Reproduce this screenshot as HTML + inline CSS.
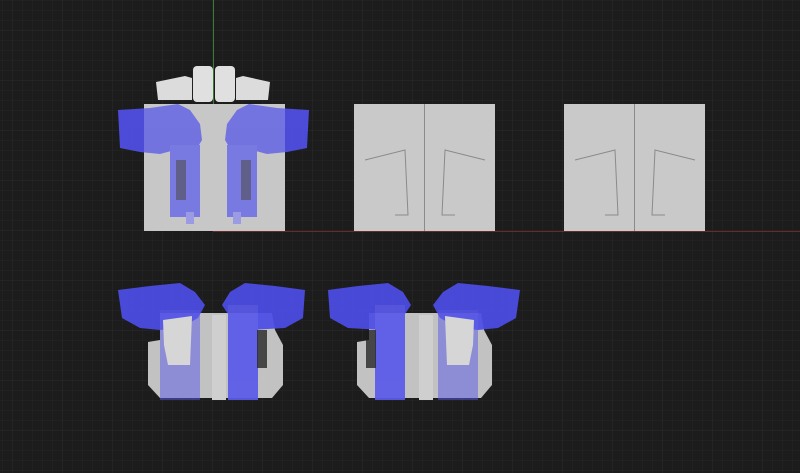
<!DOCTYPE html>
<html><head><style>
html,body{margin:0;padding:0;background:#1c1c1c;width:800px;height:473px;overflow:hidden}
svg{display:block}
</style></head><body>
<svg width="800" height="473" viewBox="0 0 800 473" xmlns="http://www.w3.org/2000/svg">
<defs>
<pattern id="g" width="10" height="10" patternUnits="userSpaceOnUse" x="3" y="1">
<path d="M10 0V10M0 10H10" stroke="#262626" stroke-width="1" fill="none"/>
</pattern>
<pattern id="g2" width="50" height="50" patternUnits="userSpaceOnUse" x="13" y="31">
<path d="M50 0V50M0 50H50" stroke="#2c2c2c" stroke-width="1" fill="none"/>
</pattern>
<g id="gunL">
<path d="M118 110 L150 108 L178 104 L190 110 L200 124 L202 140 L196 150 L175 150 L160 154 L140 152 L120 148 Z" fill="#5050e8"/>
<rect x="170" y="145" width="30" height="72" fill="#5858ea"/>
<rect x="176" y="160" width="10" height="40" fill="#1c1c1c" opacity="0.6"/>
<rect x="186" y="212" width="8" height="12" fill="#8888ee"/>
</g>
<g id="plate">
<path d="M12 13 L124 13 L127 30 L135 45 L135 85 L124 98 L12 98 L0 85 L0 42 L12 40 Z" fill="#c2c2c2"/>
</g>
<g id="gunB">
<path d="M118 290 L150 286 L180 283 L195 292 L205 305 L198 318 L180 328 L160 330 L140 328 L122 318 Z" fill="#4d4de6"/>
<rect x="160" y="310" width="40" height="90" fill="#5a5aea" opacity="0.55"/>
</g>
<g id="gunB2">
<path d="M305 290 L275 286 L245 283 L230 292 L222 305 L232 320 L250 330 L285 328 L303 318 Z" fill="#4d4de6"/>
<rect x="228" y="305" width="30" height="95" fill="#5a5aea"/>
<rect x="257" y="330" width="10" height="38" fill="#1c1c1c" opacity="0.8"/>
</g>
</defs>
<rect width="800" height="473" fill="#1c1c1c"/>
<rect width="800" height="473" fill="url(#g)"/>
<rect width="800" height="473" fill="url(#g2)"/>
<line x1="213.5" y1="0" x2="213.5" y2="104" stroke="#3a7a3a" stroke-width="1"/>
<line x1="213" y1="231.5" x2="800" y2="231.5" stroke="#6a2a2a" stroke-width="1"/>

<path d="M156 82 L185 76 L192 78 L192 100 L158 100 Z" fill="#dcdcdc"/>
<rect x="193" y="66" width="20" height="36" rx="4" fill="#e0e0e0"/>
<rect x="215" y="66" width="20" height="36" rx="4" fill="#e0e0e0"/>
<path d="M236 78 L243 76 L270 82 L268 100 L236 100 Z" fill="#dcdcdc"/>

<rect x="144" y="104" width="141" height="127" fill="#c4c4c4"/>
<use href="#gunL" opacity="0.92"/>
<use href="#gunL" transform="translate(427 0) scale(-1 1)" opacity="0.92"/>
<rect x="144" y="104" width="141" height="127" fill="#d0d0d0" opacity="0.22"/>

<rect x="354" y="104" width="141" height="127" fill="#c9c9c9"/>
<rect x="564" y="104" width="141" height="127" fill="#c9c9c9"/>
<g stroke="#8a8a8a" fill="none" stroke-width="1">
<path d="M365 160 L405 150 L408 215 L395 215"/><path d="M485 160 L445 150 L442 215 L455 215"/>
<path d="M575 160 L615 150 L618 215 L605 215"/><path d="M695 160 L655 150 L652 215 L665 215"/>
<line x1="424.5" y1="104" x2="424.5" y2="231"/><line x1="634.5" y1="104" x2="634.5" y2="231"/>
</g>

<g transform="translate(148 300)"><use href="#plate"/></g>
<g transform="translate(357 300)"><use href="#plate"/></g>
<use href="#gunB" opacity="0.93"/>
<use href="#gunB2" opacity="0.93"/>
<use href="#gunB2" transform="translate(633 0) scale(-1 1)" opacity="0.93"/>
<use href="#gunB" transform="translate(638 0) scale(-1 1)" opacity="0.93"/>
<rect x="148" y="300" width="135" height="100" fill="#d0d0d0" opacity="0"/>
<path d="M163 320 L192 316 L190 365 L168 365 L164 345 Z" fill="#d6d6d6"/>
<path d="M474 320 L445 316 L447 365 L469 365 L473 345 Z" fill="#d6d6d6"/>
<rect x="212" y="315" width="14" height="85" fill="#cfcfcf"/>
<rect x="419" y="315" width="14" height="85" fill="#cfcfcf"/>
</svg>
</body></html>
